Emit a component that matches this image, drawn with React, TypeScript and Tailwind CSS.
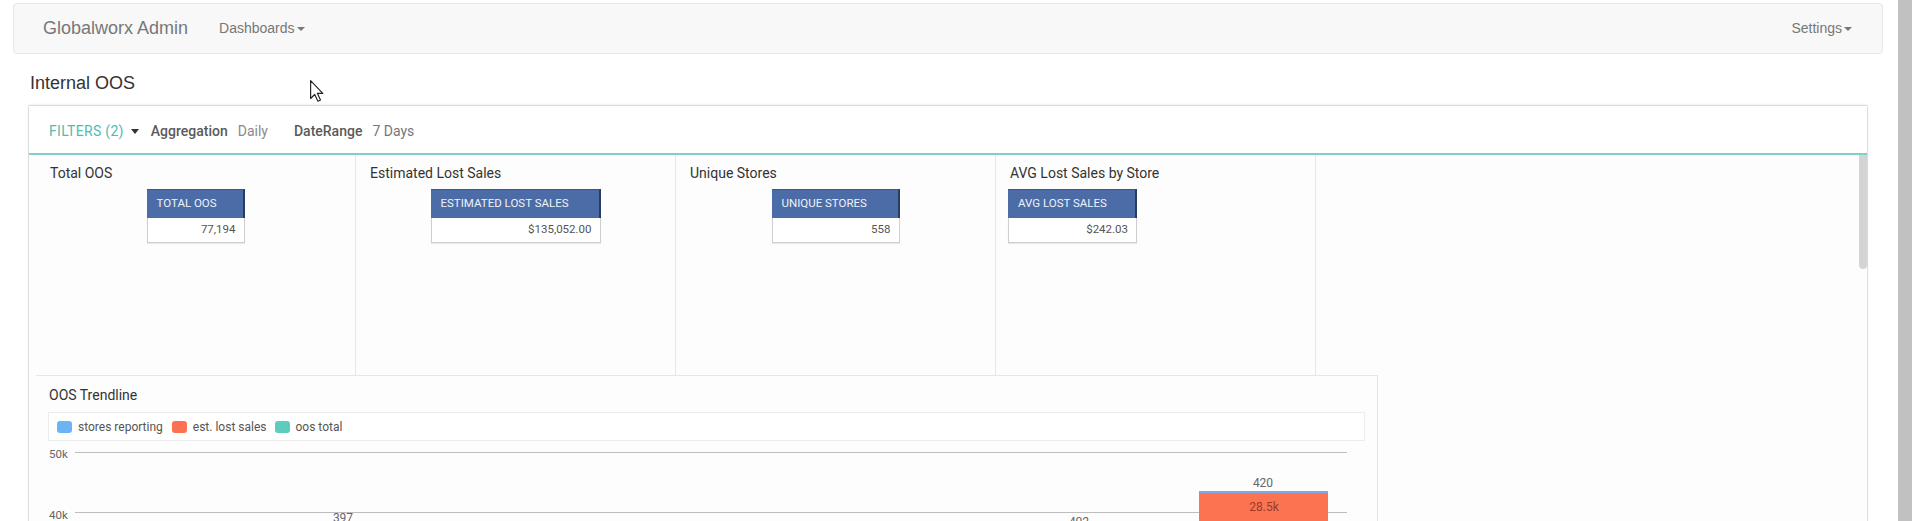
import React from "react";

const din = { fontFamily: "Roboto, 'Noto Sans', sans-serif" };
const arial = { fontFamily: "'Liberation Sans', Arial, sans-serif" };

function Caret({ className }: { className: string }) {
  return (
    <svg className={className} width="8" height="4" viewBox="0 0 8 4">
      <polygon points="0,0 8,0 4,4" fill="currentColor" />
    </svg>
  );
}

function Kpi({ label, value, w }: { label: string; value: string; w: string }) {
  return (
    <div className={w}>
      <div className="h-[29px] bg-[#4c6ca7] border-t border-t-[#3b5689] border-r-2 border-r-[#2b3c63] pl-[10px] flex items-center text-[11.5px] font-normal text-[#eef2fa] uppercase">
        {label}
      </div>
      <div className="h-[25px] bg-white border border-t-0 border-[#cfcfcf] shadow-[0_1px_1px_rgba(0,0,0,0.08)] pr-[8px] flex items-center justify-end text-[11.5px] text-[#555]">
        {value}
      </div>
    </div>
  );
}

function Card({ title, children, center = true }: { title: string; children: React.ReactNode; center?: boolean }) {
  return (
    <div className="w-[320px] h-[221px] border-r border-b border-[#e6e6e6] px-[14px] pt-[8px] flex flex-col">
      <div className="text-[14px] leading-[20px] text-[#333]">{title}</div>
      <div className={center ? "mt-[6px] flex justify-center" : "mt-[6px] flex justify-start -ml-[2px]"}>{children}</div>
    </div>
  );
}

export default function App() {
  return (
    <div className="relative h-[521px] w-[1912px] overflow-hidden flex bg-white">
      <div className="flex-1 min-w-0">
        <nav
          style={arial}
          className="mt-[3px] ml-[13px] mr-[15px] h-[51px] border border-[#e7e7e7] bg-[#f8f8f8] rounded-[4px] flex items-center justify-between pl-[29px] pr-[30px]"
        >
          <div className="flex items-center">
            <span className="text-[18px] text-[#777]">Globalworx Admin</span>
            <span className="ml-[31px] text-[14px] text-[#777] flex items-center">
              Dashboards
              <Caret className="ml-[2px] text-[#777]" />
            </span>
          </div>
          <span className="text-[14px] text-[#777] flex items-center">
            Settings
            <Caret className="ml-[2px] text-[#777]" />
          </span>
        </nav>

        <h1 style={arial} className="ml-[30px] mt-[19px] text-[18px] leading-[20px] text-[#333]">
          Internal OOS
        </h1>

        <div
          style={din}
          className="mt-[12px] ml-[28px] mr-[30px] border border-[#dcdcdc] rounded-t-[2px] shadow-[0_-1px_2px_rgba(0,0,0,0.06)] bg-[#fdfdfd]"
        >
          <div className="h-[47px] bg-white flex items-center pl-[20px] pt-[4px] text-[14px]">
            <span className="text-[#4dbdb2] tracking-[0.3px]">FILTERS (2)</span>
            <svg className="ml-[7px] text-[#333]" width="8" height="5" viewBox="0 0 8 5">
              <polygon points="0,0 8,0 4,5" fill="currentColor" />
            </svg>
            <span className="ml-[12px] font-medium text-[#5a5a5a]">Aggregation</span>
            <span className="ml-[10px] text-[#8a8a8a]">Daily</span>
            <span className="ml-[26px] font-medium text-[#5a5a5a]">DateRange</span>
            <span className="ml-[10px] text-[#777]">7 Days</span>
          </div>
          <div className="h-[2px] bg-[#80cfc8]" />

          <div className="flex">
            <div className="flex-1 min-w-0 pl-[7px]">
              <div className="flex">
                <Card title="Total OOS">
                  <Kpi label="Total OOS" value="77,194" w="w-[98px]" />
                </Card>
                <Card title="Estimated Lost Sales">
                  <Kpi label="Estimated Lost Sales" value="$135,052.00" w="w-[170px]" />
                </Card>
                <Card title="Unique Stores">
                  <Kpi label="Unique Stores" value="558" w="w-[128px]" />
                </Card>
                <Card title="AVG Lost Sales by Store" center={false}>
                  <Kpi label="AVG Lost Sales" value="$242.03" w="w-[129px]" />
                </Card>
              </div>

              <div className="w-[1342px] -mt-[1px] border-t border-r border-[#e6e6e6] pt-[9px] h-[200px]">
                <div className="pl-[13px] text-[14px] leading-[20px] text-[#333]">OOS Trendline</div>
                <div className="mt-[7px] mx-[12px] h-[29px] border border-[#ececec] bg-white flex items-center pl-[8px] text-[12px] text-[#555]">
                  <span className="w-[15px] h-[12px] rounded-[3px] bg-[#6bb3f4]" />
                  <span className="ml-[6px]">stores reporting</span>
                  <span className="ml-[9px] w-[15px] h-[12px] rounded-[3px] bg-[#fc7152]" />
                  <span className="ml-[6px]">est. lost sales</span>
                  <span className="ml-[8px] w-[15px] h-[12px] rounded-[3px] bg-[#5bccbd]" />
                  <span className="ml-[6px]">oos total</span>
                </div>
                <svg className="mt-[3px] ml-[12px] block" width="1318" height="120" viewBox="0 0 1318 120">
                  <g fontFamily="Roboto, 'Noto Sans', sans-serif" fontSize="11.5" fill="#666">
                    <text x="1" y="14">50k</text>
                    <text x="1" y="75">40k</text>
                  </g>
                  <line x1="27" y1="8.5" x2="1299" y2="8.5" stroke="#bdbdbd" strokeWidth="1" />
                  <line x1="27" y1="68.5" x2="1299" y2="68.5" stroke="#bdbdbd" strokeWidth="1" />
                  <rect x="1151" y="47" width="129" height="2" fill="#7fa9e3" />
                  <rect x="1151" y="49" width="129" height="80" fill="#fc7352" />
                  <g fontFamily="Roboto, 'Noto Sans', sans-serif" fontSize="12" textAnchor="middle">
                    <text x="1215" y="43" fill="#666">420</text>
                    <text x="1216" y="67" fill="#9a3b26">28.5k</text>
                    <text x="295" y="78" fill="#666">397</text>
                    <text x="1031" y="82" fill="#666">402</text>
                  </g>
                </svg>
              </div>
            </div>
            <div className="w-[8px] flex justify-center">
              <div className="w-[8px] h-[114px] rounded-b-[4px] bg-[#d4d4d4]" />
            </div>
          </div>
        </div>
      </div>
      <div className="w-[14px] bg-[#c1c1c1]" />

      <svg className="absolute left-[310px] top-[80px]" width="14" height="22" viewBox="0 0 12 19">
        <polygon points="0.5,0.5 0.5,16 4,12.5 6.8,18.3 9,17.3 6.3,11.5 11,11.5" fill="white" stroke="#222" strokeWidth="1" strokeLinejoin="round" />
      </svg>
    </div>
  );
}
